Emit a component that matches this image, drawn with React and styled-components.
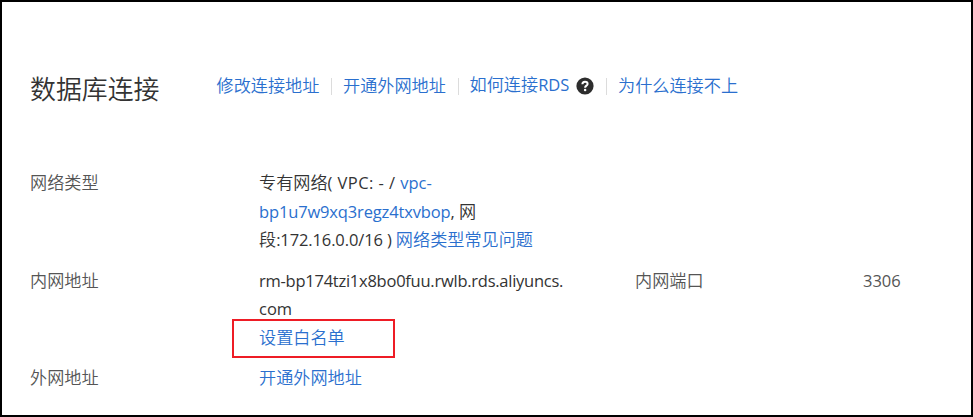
import React from "react";
import styled, { createGlobalStyle } from "styled-components";

const GlobalStyle = createGlobalStyle`
  *, *::before, *::after { box-sizing: border-box; }
  body { margin: 0; background: #fff; }
`;

const Panel = styled.main`
  width: 973px;
  height: 417px;
  padding: 64px 0 0 28px;
  overflow: hidden;
  border: 2px solid #000;
  background: #fff;
  color: #333;
  font-family: "Noto Sans", "Noto Sans CJK SC", sans-serif;
  font-size: 17.15px;
  font-weight: 350;
  line-height: 28.5px;
`;

const Header = styled.header`
  display: flex;
  align-items: flex-start;
  height: 44px;
`;

const Title = styled.h2`
  width: 187px;
  margin: 0;
  font-family: "Noto Sans CJK SC", sans-serif;
  font-size: 25.9px;
  font-weight: 350;
  line-height: 43px;
  white-space: nowrap;
`;

const Actions = styled.nav`
  display: flex;
  align-items: center;
  height: 40px;
  margin-left: -0.5px;
  white-space: nowrap;
`;

const Link = styled.a`
  color: #2a6fce;
  text-decoration: none;
  white-space: nowrap;
`;

const HelpLink = styled(Link)`
  padding-bottom: 1px;
`;

const Divider = styled.span`
  width: 1px;
  height: 17px;
  margin: 0 11px 0 11.7px;
  background: #dcdcdc;
`;

const HelpIcon = styled.svg`
  width: 18px;
  height: 18px;
  margin-left: 7px;
`;

const Details = styled.dl`
  display: grid;
  grid-template-columns: 229px 376px 228px 80px;
  row-gap: 12px;
  margin: 59px 0 0;
`;

const Label = styled.dt`
  grid-column: ${(p) => p.$column || 1};
  color: #555;
`;

const Value = styled.dd`
  grid-column: ${(p) => p.$column || 2};
  margin: 0;
  color: ${(p) => (p.$column ? "#555" : "inherit")};
  white-space: nowrap;
`;

const Line = styled.div`
  height: 28.5px;
`;

const Latin = styled.span`
  font-family: "Open Sans", "Noto Sans", sans-serif;
  font-size: 16.5px;
  font-weight: 400;
  letter-spacing: ${(p) => p.$spacing || 0}px;
`;

const Highlight = styled.div`
  display: flex;
  align-items: center;
  width: 163px;
  height: 39px;
  margin: -5px 0 -5.5px -27px;
  padding-left: 25px;
  border: 2px solid #ee1c25;
`;

export default function App() {
  return (
    <>
      <GlobalStyle />
      <Panel>
        <Header>
          <Title>数据库连接</Title>
          <Actions>
            <Link>修改连接地址</Link>
            <Divider />
            <Link>开通外网地址</Link>
            <Divider />
            <HelpLink>如何连接<Latin>RDS</Latin></HelpLink>
            <HelpIcon viewBox="0 0 18 18" aria-label="帮助">
              <circle cx="9" cy="9" r="8.6" fill="#2d2d2d" />
              <path d="M6.4 7.3C6.4 5.4 7.5 4.7 9 4.7s2.6.8 2.6 2.2c0 1.8-2.5 1.7-2.5 3.8" fill="none" stroke="#fff" strokeWidth="2" />
              <circle cx="9.1" cy="13.1" r="1.25" fill="#fff" />
            </HelpIcon>
            <Divider />
            <Link>为什么连接不上</Link>
          </Actions>
        </Header>
        <Details>
          <Label>网络类型</Label>
          <Value>
            <Line>专有网络<Latin $spacing={0.43}>( VPC: - / </Latin><Link><Latin>vpc-</Latin></Link></Line>
            <Line><Link><Latin $spacing={-0.15}>bp1u7w9xq3regz4txvbop</Latin></Link><Latin>, </Latin>网</Line>
            <Line>段<Latin $spacing={-0.12}>:172.16.0.0/16 ) </Latin><Link>网络类型常见问题</Link></Line>
          </Value>
          <Label>内网地址</Label>
          <Value>
            <Line><Latin $spacing={-0.25}>rm-bp174tzi1x8bo0fuu.rwlb.rds.aliyuncs.</Latin></Line>
            <Line><Latin>com</Latin></Line>
            <Highlight><Link>设置白名单</Link></Highlight>
          </Value>
          <Label $column={3}>内网端口</Label>
          <Value $column={4}><Latin>3306</Latin></Value>
          <Label>外网地址</Label>
          <Value><Link>开通外网地址</Link></Value>
        </Details>
      </Panel>
    </>
  );
}
